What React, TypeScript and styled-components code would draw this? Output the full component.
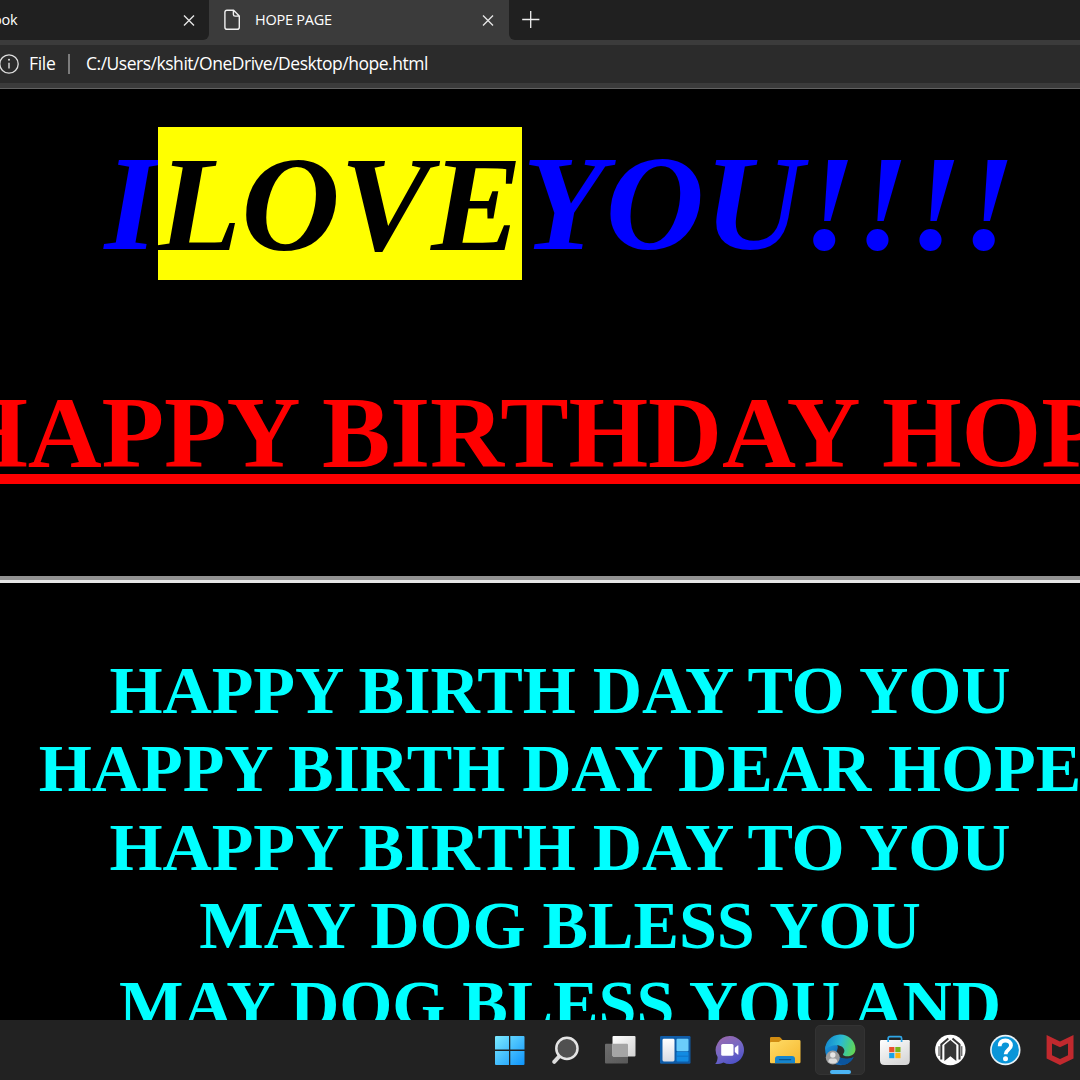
import React from 'react';
import styled, { createGlobalStyle } from 'styled-components';

const GlobalStyle = createGlobalStyle`
  html, body { margin: 0; background: #000; overflow: hidden; }
  * { box-sizing: border-box; }
`;

const Screen = styled.div`
  width: 1080px;
  height: 1080px;
  display: flex;
  flex-direction: column;
  overflow: hidden;
  background: #000;
`;

const Chrome = styled.header`
  flex: none;
  height: 89px;
  background: #3b3b3b;
  border-bottom: 1px solid #626262;
  font-family: 'Open Sans', 'Noto Sans', sans-serif;
  color: #fff;
`;

const TabStrip = styled.div`
  display: flex;
  height: 40px;
`;

const Tab = styled.div<{ $active?: boolean; $width: number }>`
  flex: none;
  width: ${(p) => p.$width}px;
  height: 40px;
  display: flex;
  align-items: center;
  justify-content: space-between;
  padding: ${(p) => (p.$active ? '0 14px 0 14px' : '0 13px 0 0')};
  background: ${(p) => (p.$active ? '#3b3b3b' : '#202020')};
  border-radius: ${(p) => (p.$active ? '0' : '0 0 6px 0')};
`;

const StripEnd = styled.div`
  flex: 1;
  display: flex;
  align-items: center;
  padding-left: 12px;
  background: #202020;
  border-radius: 0 0 0 6px;
`;

const TabTitle = styled.span<{ $grow?: boolean }>`
  flex: ${(p) => (p.$grow ? '1' : 'none')};
  margin-left: ${(p) => (p.$grow ? '14px' : '-7px')};
  font-size: 14.5px;
  line-height: 20px;
  letter-spacing: -0.25px;
  white-space: nowrap;
`;

const AddressBar = styled.div`
  margin-top: 5px;
  height: 38px;
  display: flex;
  align-items: center;
  background: #2b2b2b;
  font-size: 17.5px;
  line-height: 24px;
  white-space: nowrap;
`;

const Scheme = styled.span`
  margin-left: 9px;
  width: 30px;
  padding-bottom: 2px;
  letter-spacing: -0.3px;
`;

const Separator = styled.span`
  width: 2px;
  height: 20px;
  margin: 0 16px 0 9px;
  background: #7c7c7c;
`;

const Url = styled.span`
  padding-bottom: 2px;
  letter-spacing: -0.48px;
`;

const Page = styled.main`
  flex: 1;
  min-height: 0;
  width: 1120px;
  overflow: hidden;
  padding-top: 36px;
  background: #000;
  font-family: 'Liberation Serif', 'Times New Roman', serif;
  font-weight: bold;
  text-align: center;
  white-space: nowrap;
`;

const Love = styled.h1`
  margin: 0;
  height: 249px;
  font-size: 136.6px;
  line-height: 157px;
  font-style: italic;
  color: #00f;
`;

const Mark = styled.mark`
  background: #ff0;
  color: #000;
  padding: 0.5px 0;
`;

const Headline = styled.h2`
  display: flex;
  justify-content: center;
  margin: 0;
  height: 202px;
  font-size: 102.5px;
  line-height: 118px;
  letter-spacing: -0.15px;
  color: #f00;
  text-decoration: underline;
  text-decoration-thickness: 10px;
  text-underline-offset: 7px;
  text-decoration-skip-ink: none;
`;

const Rule = styled.div`
  height: 7px;
  border-top: 4px solid #929292;
  border-bottom: 3px solid #e6e6e6;
`;

const Song = styled.div`
  margin-top: 68px;
  font-size: 68.3px;
  line-height: 78.4px;
  letter-spacing: -0.1px;
  color: #0ff;
`;

const Taskbar = styled.footer`
  flex: none;
  height: 60px;
  display: flex;
  align-items: center;
  gap: 5px;
  padding-left: 485px;
  background: #222;
  overflow: hidden;
`;

const TaskButton = styled.div<{ $active?: boolean }>`
  position: relative;
  flex: none;
  width: 50px;
  height: 50px;
  display: flex;
  align-items: center;
  justify-content: center;
  border-radius: 5px;
  background: ${(p) => (p.$active ? '#2d2d2d' : 'transparent')};
  border: 1px solid ${(p) => (p.$active ? '#333' : 'transparent')};
`;

const RunningPill = styled.span`
  position: absolute;
  bottom: 0;
  left: 14px;
  width: 21px;
  height: 4px;
  border-radius: 2px;
  background: #4cb5f5;
`;

const CloseIcon = () => (
  <svg width="14" height="14" viewBox="0 0 14 14">
    <path d="M2 2.4L12 12.4M12 2.4L2 12.4" stroke="#e4e4e4" strokeWidth="1.4" fill="none" />
  </svg>
);

const PageIcon = () => (
  <svg width="18" height="22" viewBox="0 0 18 22">
    <path
      d="M4 1.2H10.6L16.3 7V18.2Q16.3 20.3 14.2 20.3H4Q1.9 20.3 1.9 18.2V3.3Q1.9 1.2 4 1.2ZM10.4 1.4V5.4Q10.4 7.1 12.1 7.1H16"
      stroke="#f0f0f0"
      strokeWidth="1.4"
      fill="none"
      strokeLinejoin="round"
    />
  </svg>
);

const PlusIcon = () => (
  <svg width="20" height="20" viewBox="0 0 20 20">
    <path d="M1.2 9.5H18.4M9.7 1V18" stroke="#efefef" strokeWidth="1.3" fill="none" />
  </svg>
);

const InfoIcon = () => (
  <svg width="20" height="20" viewBox="0 0 20 20">
    <circle cx="9" cy="10" r="9.2" stroke="#dedede" strokeWidth="1.3" fill="none" />
    <path d="M9 8.7V14.6" stroke="#dedede" strokeWidth="1.4" />
    <circle cx="9" cy="5.8" r="1" fill="#dedede" />
  </svg>
);

const Icon = ({ children }: { children: React.ReactNode }) => (
  <svg width="32" height="32" viewBox="0 0 32 32">
    {children}
  </svg>
);

const WindowsIcon = () => (
  <Icon>
    <defs>
      <linearGradient id="win" gradientUnits="userSpaceOnUse" x1="1" y1="2" x2="30" y2="31">
        <stop offset="0" stopColor="#7ceaff" />
        <stop offset="1" stopColor="#0f94fb" />
      </linearGradient>
    </defs>
    <path
      d="M2 2H15V15.5H1V3Q1 2 2 2ZM16.3 2H29.5Q30.5 2 30.5 3V15.5H16.3ZM1 17H15V31H2Q1 31 1 30ZM16.3 17H30.5V30Q30.5 31 29.5 31H16.3Z"
      fill="url(#win)"
    />
  </Icon>
);

const SearchIcon = () => (
  <Icon>
    <path d="M10.7 21.8L5.2 27.8" stroke="#dcdcdc" strokeWidth="4" strokeLinecap="round" />
    <circle cx="17.9" cy="14.4" r="10.6" fill="#505050" stroke="#e4e4e4" strokeWidth="2.5" />
  </Icon>
);

const TaskViewIcon = () => (
  <Icon>
    <defs>
      <linearGradient id="tvw" x1="0" y1="0" x2="1" y2="1">
        <stop offset="0" stopColor="#fff" />
        <stop offset="1" stopColor="#d2d2d2" />
      </linearGradient>
      <linearGradient id="tvg" x1="0" y1="0" x2="1" y2="1">
        <stop offset="0" stopColor="#6d6d6d" />
        <stop offset="1" stopColor="#585858" />
      </linearGradient>
    </defs>
    <rect x="1" y="9.8" width="23" height="19.7" rx="1" fill="url(#tvg)" />
    <rect x="8.5" y="2" width="23" height="20.4" rx="1" fill="url(#tvw)" />
    <path d="M8.5 9.8H23Q24 9.8 24 10.8V22.4H9.5Q8.5 22.4 8.5 21.4Z" fill="#a5a5a5" />
  </Icon>
);

const WidgetsIcon = () => (
  <Icon>
    <defs>
      <linearGradient id="wp" x1="0" y1="0" x2="0" y2="1">
        <stop offset="0" stopColor="#fff" />
        <stop offset="1" stopColor="#d9dce4" />
      </linearGradient>
    </defs>
    <rect x="1" y="2" width="30.5" height="27.7" rx="1.2" fill="#0f5ca8" />
    <rect x="3.5" y="4.7" width="12" height="22.7" rx="1.4" fill="url(#wp)" />
    <rect x="17.5" y="4.7" width="12" height="12.5" rx="1" fill="#6bcdfb" />
    <rect x="17.5" y="17.8" width="12" height="9.6" rx="1" fill="#128be2" />
    <path d="M17.5 22.2H29.5" stroke="#0f6fc0" strokeWidth="0.8" />
  </Icon>
);

const ChatIcon = () => (
  <Icon>
    <defs>
      <linearGradient id="ch" x1="0.2" y1="0" x2="0.7" y2="1">
        <stop offset="0" stopColor="#9a68ac" />
        <stop offset="0.5" stopColor="#7668c4" />
        <stop offset="1" stopColor="#4b50c8" />
      </linearGradient>
    </defs>
    <path d="M16 2A14 14 0 1 1 9.5 28.4C7 29.6 3.5 30.3 1.2 30C3 28 3.6 25.5 3.6 23A14 14 0 0 1 16 2Z" fill="url(#ch)" />
    <rect x="7.2" y="10" width="12.3" height="11.8" rx="1.5" fill="#fff" />
    <path d="M20.8 13.8L23.6 11.4Q24.4 11 24.4 12V20Q24.4 21 23.6 20.5L20.8 18Z" fill="#fff" />
  </Icon>
);

const FolderIcon = () => (
  <Icon>
    <defs>
      <linearGradient id="fo" x1="0" y1="0" x2="1" y2="1">
        <stop offset="0" stopColor="#ffdc68" />
        <stop offset="1" stopColor="#f6b72d" />
      </linearGradient>
    </defs>
    <path d="M1 10V4.2Q1 3 2.2 3H10.2Q11 3 11.6 3.7L14 6.4V10Z" fill="#d18c12" />
    <path d="M2 8H9.8L12.8 6H30.2Q31.5 6 31.5 7.3V28Q31.5 29.3 30.2 29.3H2.2Q1 29.3 1 28V9Q1 8 2 8Z" fill="url(#fo)" />
    <path d="M6 29.3V25Q6 22 9 22H23Q26 22 26 25V29.3Z" fill="#1685cd" />
    <path d="M10.5 25.6H21.6" stroke="#07548e" strokeWidth="1.4" strokeLinecap="round" />
  </Icon>
);

const EdgeIcon = () => (
  <Icon>
    <defs>
      <linearGradient id="eg" gradientUnits="userSpaceOnUse" x1="3" y1="8" x2="31" y2="16">
        <stop offset="0" stopColor="#168ed0" />
        <stop offset="0.45" stopColor="#2bb9d4" />
        <stop offset="0.75" stopColor="#45cc8b" />
        <stop offset="1" stopColor="#66d651" />
      </linearGradient>
      <linearGradient id="eb" gradientUnits="userSpaceOnUse" x1="2" y1="10" x2="24" y2="31">
        <stop offset="0" stopColor="#1991d8" />
        <stop offset="1" stopColor="#0a54a6" />
      </linearGradient>
    </defs>
    <path d="M1.2 16C1.2 8 6 9 10.5 10C15 11 14 14 12.8 17C11.5 22 18 27.5 29.6 23.2C25.5 30.4 19 32 13.5 30.8C6.2 29.2 1.2 23 1.2 16Z" fill="url(#eb)" />
    <path d="M12.8 17C11.5 22 18 27.5 29.6 23.2C27 28 23 30.6 19 31C12 29 8.7 21 12.8 17Z" fill="#0b559e" />
    <path d="M1.2 16A15.1 15 0 0 1 31.5 15C31.5 20 27.5 22.3 23.6 22.3C20.3 22.3 18.1 21.2 19.3 19.7C22.5 15.5 18.3 11.2 12.7 11.2C7.4 11.2 3 13.3 1.2 16Z" fill="url(#eg)" />
    <circle cx="8.8" cy="23.6" r="7" fill="#9c9d9e" />
    <circle cx="8.8" cy="21" r="2.7" fill="#e6e6e6" />
    <path d="M4.4 28Q4.4 24.5 7 24.5H10.7Q13.2 24.5 13.2 28Q9 31 4.4 28Z" fill="#dcdcdc" />
  </Icon>
);

const StoreIcon = () => (
  <Icon>
    <defs>
      <linearGradient id="st" x1="0" y1="0" x2="0.6" y2="1">
        <stop offset="0" stopColor="#fff" />
        <stop offset="1" stopColor="#d8d8d8" />
      </linearGradient>
    </defs>
    <path d="M1 7.2Q1 6 2.2 6H29.6Q30.8 6 30.8 7.2V26.5Q30.8 31 26.3 31H5.5Q1 31 1 26.5Z" fill="url(#st)" />
    <path d="M9.2 8V4.3Q9.2 2.7 10.8 2.7H21Q22.6 2.7 22.6 4.3V8" fill="none" stroke="#2fa6e6" strokeWidth="1.7" />
    <rect x="10.2" y="13" width="5.2" height="5.2" fill="#e9502b" />
    <rect x="16.3" y="13" width="5.2" height="5.2" fill="#7ab517" />
    <rect x="10.2" y="19" width="5.2" height="5.2" fill="#17a2e8" />
    <rect x="16.3" y="19" width="5.2" height="5.2" fill="#fcb414" />
  </Icon>
);

const BadgeIcon = () => (
  <Icon>
    <circle cx="16.3" cy="16" r="15.2" fill="#fff" />
    <path d="M10.4 11L16.4 6L22.3 11V27L16.4 22.3L10.4 27Z" fill="#363636" />
    <path d="M14.3 4.6L7.3 10.5V25.5M18.5 4.6L25.5 10.5V25.5" fill="none" stroke="#363636" strokeWidth="2" />
    <path d="M5 12.2V22M27.8 12.2V22" stroke="#363636" strokeWidth="1" />
  </Icon>
);

const HelpIcon = () => (
  <Icon>
    <circle cx="16.3" cy="16" r="15.2" fill="#e9f2f7" />
    <circle cx="16.3" cy="16" r="13.6" fill="#0a95d8" />
    <path d="M10.7 12.3C10.7 8.4 13 6.5 16.4 6.5C19.9 6.5 22 8.5 22 11.4C22 15.6 16.6 15.7 16.6 20.3" fill="none" stroke="#fff" strokeWidth="3.8" />
    <circle cx="16.5" cy="24.7" r="2.5" fill="#fff" />
  </Icon>
);

const ShieldIcon = () => (
  <Icon>
    <path d="M2.6 1L16 7.6L29.5 1V24.5L16 31L2.6 24.5ZM8 9.4V21.2L16 25L24 21.2V9.4L16 13.2Z" fill="#c1292e" fillRule="evenodd" />
  </Icon>
);

const LINES = [
  'HAPPY BIRTH DAY TO YOU',
  'HAPPY BIRTH DAY DEAR HOPE',
  'HAPPY BIRTH DAY TO YOU',
  'MAY DOG BLESS YOU',
  'MAY DOG BLESS YOU AND',
];

const APPS = [
  { name: 'start', Glyph: WindowsIcon },
  { name: 'search', Glyph: SearchIcon },
  { name: 'taskview', Glyph: TaskViewIcon },
  { name: 'widgets', Glyph: WidgetsIcon },
  { name: 'chat', Glyph: ChatIcon },
  { name: 'files', Glyph: FolderIcon },
  { name: 'edge', Glyph: EdgeIcon, active: true },
  { name: 'store', Glyph: StoreIcon },
  { name: 'badge', Glyph: BadgeIcon },
  { name: 'help', Glyph: HelpIcon },
  { name: 'shield', Glyph: ShieldIcon },
];

export default function App() {
  return (
    <Screen>
      <GlobalStyle />
      <Chrome>
        <TabStrip>
          <Tab $width={209}>
            <TabTitle>ook</TabTitle>
            <CloseIcon />
          </Tab>
          <Tab $width={300} $active>
            <PageIcon />
            <TabTitle $grow>HOPE PAGE</TabTitle>
            <CloseIcon />
          </Tab>
          <StripEnd>
            <PlusIcon />
          </StripEnd>
        </TabStrip>
        <AddressBar>
          <InfoIcon />
          <Scheme>File</Scheme>
          <Separator />
          <Url>C:/Users/kshit/OneDrive/Desktop/hope.html</Url>
        </AddressBar>
      </Chrome>
      <Page>
        <Love>
          I<Mark>LOVE</Mark>YOU!!!!
        </Love>
        <Headline>HAPPY BIRTHDAY HOPE</Headline>
        <Rule />
        <Song>
          {LINES.map((line, i) => (
            <div key={i}>{line}</div>
          ))}
        </Song>
      </Page>
      <Taskbar>
        {APPS.map(({ name, Glyph, active }) => (
          <TaskButton key={name} $active={active}>
            <Glyph />
            {active && <RunningPill />}
          </TaskButton>
        ))}
      </Taskbar>
    </Screen>
  );
}
